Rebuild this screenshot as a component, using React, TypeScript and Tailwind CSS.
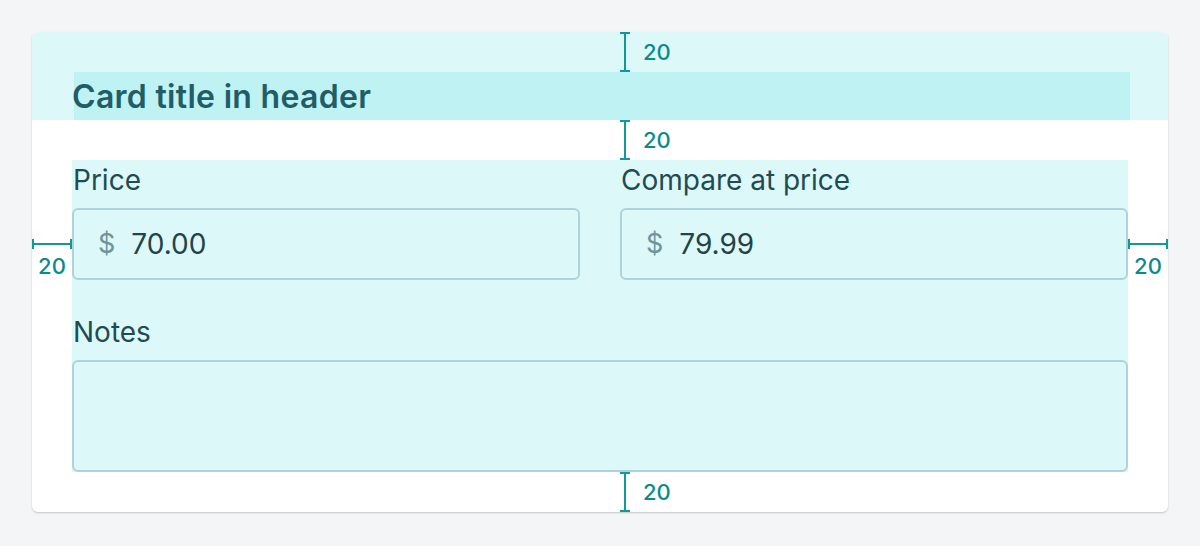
const MARK = "#10999a";

function VMark({ left, top }: { left: number; top: number }) {
  return (
    <div className="absolute flex items-center" style={{ left, top }}>
      <svg width="12" height="40" viewBox="0 0 12 40">
        <path d="M6 1V39M1 1H11M1 39H11" stroke={MARK} strokeWidth="2" fill="none" />
      </svg>
      <span className="ml-[12px] text-[22px] font-medium leading-none text-[#0b8b8d]">20</span>
    </div>
  );
}

function HMark({ left, top }: { left: number; top: number }) {
  return (
    <div className="absolute flex w-10 flex-col items-center" style={{ left, top }}>
      <svg width="40" height="12" viewBox="0 0 40 12">
        <path d="M1 6H39M1 1V11M39 1V11" stroke={MARK} strokeWidth="2" fill="none" />
      </svg>
      <span className="mt-[5px] text-[22px] font-medium leading-none text-[#0b8b8d]">20</span>
    </div>
  );
}

function PriceField({ label, value }: { label: string; value: string }) {
  return (
    <div className="flex flex-col">
      <label className="mb-2 h-10 pl-px text-[28px] leading-10 text-[#1f4b53]">{label}</label>
      <div className="flex h-[72px] items-center rounded-md border-2 border-[#add4da] pl-6">
        <span className="text-[27px] text-[#6f959b]">$</span>
        <span className="ml-[16px] text-[28px] text-[#22434a]">{value}</span>
      </div>
    </div>
  );
}

export default function App() {
  return (
    <div className="min-h-screen bg-[#f4f5f7] p-8" style={{ fontFamily: "Inter, 'Noto Sans', sans-serif" }}>
      <div className="relative h-[480px] w-[1136px] overflow-hidden rounded-md bg-white shadow-[0_1px_2px_rgba(0,0,0,0.2)]">
        {/* Header */}
        <div className="bg-[#ddf8f9] px-10 pt-10">
          <div className="-mr-[2px] ml-[2px] h-12 bg-[#bff2f3] text-[32px] font-semibold leading-[50px] tracking-[0.3px] text-[#215d66]">
            <span className="-ml-[2px]">Card title in header</span>
          </div>
        </div>

        {/* Body */}
        <div className="p-10">
          <div className="bg-[#ddf8f9]">
            <div className="grid grid-cols-2 gap-10">
              <PriceField label="Price" value="70.00" />
              <PriceField label="Compare at price" value="79.99" />
            </div>
            <div className="mt-8 flex flex-col">
              <label className="mb-2 h-10 pl-px text-[28px] leading-10 text-[#1f4b53]">Notes</label>
              <textarea className="h-[112px] resize-none rounded-md border-2 border-[#add4da] bg-transparent outline-none" />
            </div>
          </div>
        </div>

        <VMark left={587} top={0} />
        <VMark left={587} top={88} />
        <VMark left={587} top={440} />
        <HMark left={0} top={206} />
        <HMark left={1096} top={206} />
      </div>
    </div>
  );
}
